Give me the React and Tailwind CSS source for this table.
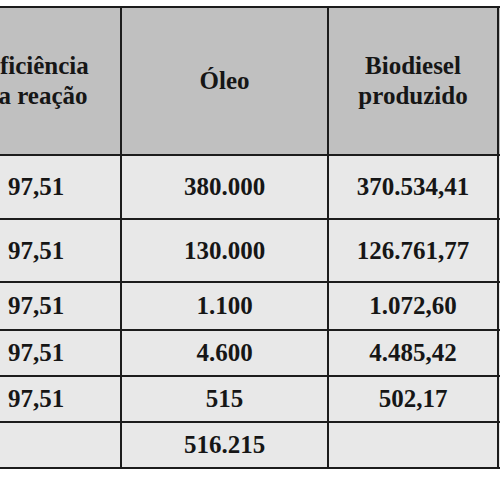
const rows = [
  { h: "h-[64px]", a: "97,51", b: "380.000", c: "370.534,41" },
  { h: "h-[63px]", a: "97,51", b: "130.000", c: "126.761,77" },
  { h: "h-[48px]", a: "97,51", b: "1.100", c: "1.072,60" },
  { h: "h-[46px]", a: "97,51", b: "4.600", c: "4.485,42" },
  { h: "h-[46px]", a: "97,51", b: "515", c: "502,17" },
  { h: "h-[46px]", a: "", b: "516.215", c: "" },
];

const cell = "border-2 border-[#1c1c1c] text-center font-bold";

export default function App() {
  return (
    <div className="w-[500px] h-[500px] overflow-hidden bg-white text-[#161616] font-['Liberation_Serif','Times_New_Roman',serif]">
      <table className="table-fixed border-collapse ml-[-50px] mt-[6px] w-[647px] text-[25px] leading-[30px] font-bold">
        <colgroup>
          <col className="w-[170px]" />
          <col className="w-[207px]" />
          <col className="w-[170px]" />
          <col className="w-[100px]" />
        </colgroup>
        <thead>
          <tr className="h-[148px] bg-[#c0c0c0]">
            <th className={cell}>
              Eficiência
              <br />
              da reação
            </th>
            <th className={cell}>Óleo</th>
            <th className={cell}>
              Biodiesel
              <br />
              produzido
            </th>
            <th className={cell}></th>
          </tr>
        </thead>
        <tbody>
          {rows.map((r, i) => (
            <tr key={i} className={`${r.h} bg-[#e8e8e8]`}>
              <td className={cell}>{r.a}</td>
              <td className={cell}>{r.b}</td>
              <td className={cell}>{r.c}</td>
              <td className={cell}></td>
            </tr>
          ))}
        </tbody>
      </table>
    </div>
  );
}
